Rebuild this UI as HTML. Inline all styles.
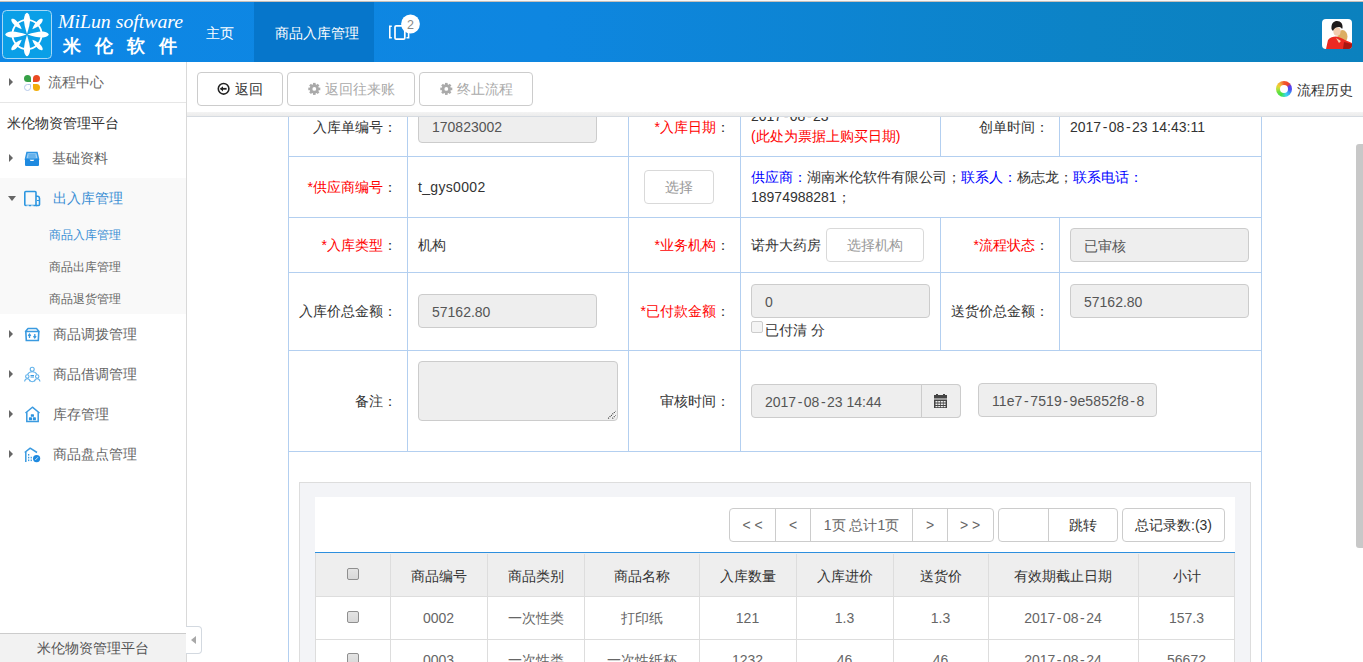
<!DOCTYPE html>
<html><head><meta charset="utf-8">
<style>
*{margin:0;padding:0;box-sizing:border-box}
html,body{width:1363px;height:662px;overflow:hidden;background:#fff;font-family:"Liberation Sans",sans-serif;font-size:14px;color:#333}
.a{position:absolute}
#top{left:0;top:0;width:1363px;height:2px;background:linear-gradient(#f7f7f7 50%,#c6bfba 50%)}
#hdr{left:0;top:2px;width:1363px;height:60px;background:linear-gradient(to right,#0d87e6 0%,#0e86e0 40%,#0c83c6 80%,#0b81be 100%)}
.logo{left:2px;top:10px;width:50px;height:49px;border:1px solid #9fd4f5;border-radius:4px;background:#109ce6}
.brand1{left:58px;top:10px;font-family:"Liberation Serif",serif;font-style:italic;font-size:19.8px;color:#fff;white-space:nowrap}
.brand2{left:63px;top:34px;font-size:18px;font-weight:bold;color:#fff;letter-spacing:14px;white-space:nowrap}
.nav{color:#fff;font-size:14px;white-space:nowrap}
.tab{left:254px;top:2px;width:120px;height:60px;background:#0676cb}
.avatar{left:1322px;top:19px;width:30px;height:30px;border-radius:4px;background:#fff;overflow:hidden}
#side{left:0;top:62px;width:187px;height:600px;background:#fff;border-right:1px solid #d9d9d9}
.sitem{left:0;width:186px;height:40px;line-height:40px;white-space:nowrap;color:#555}
.tri{width:0;height:0;border-top:4px solid transparent;border-bottom:4px solid transparent;border-left:4px solid #666}
.trid{width:0;height:0;border-left:4px solid transparent;border-right:4px solid transparent;border-top:5px solid #666}
.sub{font-size:12px;color:#666;white-space:nowrap}
#foot{left:0;top:633px;width:186px;height:29px;background:#f2f2f2;border-top:1px solid #ccc;text-align:center;line-height:28px;color:#555}
.btn{height:34px;border:1px solid #ccc;border-radius:4px;background:#fff;text-align:center;line-height:32px;white-space:nowrap}
.lbl{text-align:right;white-space:nowrap}
.red{color:#f00}
.blue{color:#00f}
.inp{height:34px;border:1px solid #ccc;border-radius:4px;background:#eee;line-height:32px;padding-top:1px;padding-left:13px;color:#555;white-space:nowrap;overflow:hidden}
.hl{background:#b3cff0;height:1px}
.vl{background:#b3cff0;width:1px}
.th{background:#f0f0f0}
.cell{text-align:center;white-space:nowrap;color:#555}
.cb{width:12px;height:12px;border:1px solid #8f8f8f;border-radius:2px;background:linear-gradient(#e4e4e4,#d8d8d8)}
.hy{font-style:normal;padding:0 1.5px}
</style></head><body>
<div class="a" id="top"></div>
<div class="a" id="hdr"></div>
<div class="a tab"></div>
<svg class="a" style="left:2px;top:10px" width="50" height="49" viewBox="0 0 50 49">
<defs><path id="pn" d="M0,-0.5 C1.8,-6 3.3,-12 3,-16 C2.7,-19.5 1,-21.8 0,-21.8 C-1,-21.8 -2.7,-19.5 -3,-16 C-3.3,-12 -1.8,-6 0,-0.5 Z"/><path id="pd" d="M0,-7.5 C2,-11 2.5,-15 2.2,-18 C1.9,-20.5 0.8,-21.8 0,-21.8 C-0.8,-21.8 -1.9,-20.5 -2.2,-18 C-2.5,-15 -2,-11 0,-7.5 Z"/></defs>
<rect x="0.5" y="0.5" width="49" height="48" rx="4" fill="#0a9fe7" stroke="#a6d8f6" stroke-width="1"/>
<g transform="translate(25,24.5)" fill="#fff">
<circle r="14.6" fill="none" stroke="#fff" stroke-width="1.8"/>
<use href="#pn"/><use href="#pn" transform="rotate(90)"/><use href="#pn" transform="rotate(180)"/><use href="#pn" transform="rotate(270)"/>
<use href="#pd" transform="rotate(45)"/><use href="#pd" transform="rotate(135)"/><use href="#pd" transform="rotate(225)"/><use href="#pd" transform="rotate(315)"/>
</g></svg>
<div class="a brand1">MiLun software</div>
<div class="a brand2">米伦软件</div>
<div class="a nav" style="left:206px;top:25px">主页</div>
<div class="a nav" style="left:275px;top:25px">商品入库管理</div>
<svg class="a" style="left:386px;top:12px" width="36" height="32" viewBox="0 0 36 32">
<path d="M5.8,14.2 H3.8 V25.8 H5.8" fill="none" stroke="#fff" stroke-width="1.6"/>
<path d="M20.5,18 H22.6 V25.8 H20.5" fill="none" stroke="#fff" stroke-width="1.6"/>
<rect x="9" y="13.9" width="9.8" height="13.2" rx="1.2" fill="none" stroke="#fff" stroke-width="1.7"/>
<circle cx="24.5" cy="12" r="9.4" fill="#fff"/>
<text x="24.5" y="16.5" text-anchor="middle" font-family="Liberation Sans" font-size="12.5" fill="#888">2</text>
</svg>
<svg class="a" style="left:1322px;top:19px" width="30" height="30" viewBox="0 0 30 30">
<defs><clipPath id="av"><rect width="30" height="30" rx="4"/></clipPath></defs>
<g clip-path="url(#av)">
<rect width="30" height="30" fill="#fff"/>
<ellipse cx="20.5" cy="17.5" rx="5" ry="6.5" fill="#dcae62"/>
<path d="M4,30 L6,21 C8,18 11,17.5 14,17.5 C17,18 20,19 23,21 L30,24 V30 Z" fill="#ec2a22"/>
<path d="M22,23 L30,25 V30 H21 Z" fill="#a81612"/>
<path d="M14,19 L17,24 L19,22 Z" fill="#f4d0b0"/>
<ellipse cx="15" cy="12.5" rx="3.6" ry="4.2" fill="#f2cdb0"/>
<path d="M9.5,10 C9,4 12,2 15,2 C19,2 21,5 20.5,9 C20,11 19.5,8 17,8 C14,8 12,9.5 11,12 C10.5,11 9.8,11 9.5,10 Z" fill="#1e1a1a"/>
</g></svg>

<!-- sidebar -->
<div class="a" id="side"></div>

<div class="a" style="left:0;top:102px;width:186px;height:1px;background:#e6e6e6"></div>
<div class="a tri" style="left:9px;top:78px"></div>
<div class="a" style="left:24px;top:75px;width:7px;height:7px;border-radius:50% 50% 0 50%;background:#36a046"></div>
<div class="a" style="left:33px;top:75px;width:7px;height:7px;border-radius:50% 50% 50% 0;background:#ea4a22"></div>
<div class="a" style="left:24px;top:84px;width:7px;height:7px;border-radius:50% 0 50% 50%;border:1px solid #b5c9ea;background:#fff"></div>
<div class="a" style="left:33px;top:84px;width:7px;height:7px;border-radius:0 50% 50% 50%;background:#f2ae0a"></div>
<div class="a" style="left:48px;top:74px;white-space:nowrap;color:#666">流程中心</div>
<div class="a" style="left:7px;top:115px;white-space:nowrap;color:#333">米伦物资管理平台</div>

<div class="a tri" style="left:9px;top:154px"></div>
<svg class="a" style="left:24px;top:151px" width="16" height="16" viewBox="0 0 16 16"><path d="M3,1.5 H13 L14.5,8 H1.5 Z" fill="#9fd0f5"/><path d="M3,1.5 H13 L14.5,8 H1.5 Z" fill="none" stroke="#2e94e2" stroke-width="1.5"/><path d="M4.5,4 H11.5 M4.2,6 H11.8" stroke="#2e94e2" stroke-width="1"/><path d="M1,8 H5.5 L6.5,10 H9.5 L10.5,8 H15 V14 Q15,15 14,15 H2 Q1,15 1,14 Z" fill="#1f8ae0"/></svg>
<div class="a" style="left:52px;top:150px;white-space:nowrap;color:#666">基础资料</div>

<div class="a" style="left:0;top:178px;width:187px;height:136px;background:#f9f9f9;border-right:1px solid #d9d9d9"></div>
<div class="a trid" style="left:8px;top:196px"></div>
<svg class="a" style="left:23px;top:190px" width="18" height="18" viewBox="0 0 18 18"><path d="M13,15.5 H2.8 Q1.8,15.5 1.8,14.5 V2.5 Q1.8,1.5 2.8,1.5 H12 Q13,1.5 13,2.5 Z" fill="none" stroke="#2c96e0" stroke-width="1.6"/><path d="M13,6.2 H15 Q16.5,6.5 16.5,8.5 V14.5 Q16.5,15.5 15.5,15.5 H13" fill="none" stroke="#2c96e0" stroke-width="1.6"/><path d="M3.5,16.2 H6 M8,16.2 H10.5" stroke="#f9f9f9" stroke-width="1.2"/><path d="M14,10.5 H16" stroke="#2c96e0" stroke-width="1"/></svg>
<div class="a" style="left:53px;top:190px;white-space:nowrap;color:#3a8ed4">出入库管理</div>
<div class="a sub" style="left:49px;top:227px;color:#3a8ed4">商品入库管理</div>
<div class="a sub" style="left:49px;top:259px">商品出库管理</div>
<div class="a sub" style="left:49px;top:291px">商品退货管理</div>

<div class="a tri" style="left:9px;top:330px"></div>
<svg class="a" style="left:24px;top:327px" width="17" height="15" viewBox="0 0 17 15"><path d="M4,1.5 H12.5 L15,4.5 H1.5 Z" fill="none" stroke="#3a9ae0" stroke-width="1.5" stroke-linejoin="round"/><path d="M1.8,4.5 L2.3,13.5 H14.3 L14.8,4.5" fill="none" stroke="#3a9ae0" stroke-width="1.6"/><path d="M5.5,11 V7.5 M4.2,8.8 L5.5,7 L6.8,8.8 M10.8,7 V10.5 M9.5,9.2 L10.8,11 L12.1,9.2" fill="none" stroke="#3a9ae0" stroke-width="1.3"/></svg>
<div class="a" style="left:53px;top:326px;white-space:nowrap;color:#666">商品调拨管理</div>
<div class="a tri" style="left:9px;top:370px"></div>
<svg class="a" style="left:24px;top:366px" width="17" height="18" viewBox="0 0 17 18"><g fill="none" stroke="#5eb0ea" stroke-width="1.1"><circle cx="8.2" cy="3.2" r="2"/><path d="M3.5,8.5 Q5,5.8 8.2,5.8 Q11.5,5.8 13,8.5"/><circle cx="3.3" cy="10.5" r="1.7"/><circle cx="13.2" cy="10.5" r="1.7"/><path d="M0.6,15.5 Q1,12.8 3.3,12.8 Q5.5,12.8 6,15.5 M10.5,15.5 Q11,12.8 13.2,12.8 Q15.4,12.8 16,15.5"/><path d="M5.5,14 Q8.2,17.5 11,14"/><path d="M6.5,9.5 H10 M6.5,11 H10" stroke="#3a9ae0" stroke-width="1"/></g></svg>
<div class="a" style="left:53px;top:366px;white-space:nowrap;color:#666">商品借调管理</div>
<div class="a tri" style="left:9px;top:410px"></div>
<svg class="a" style="left:24px;top:406px" width="17" height="17" viewBox="0 0 17 17"><path d="M1.5,7 L8.4,1.2 L15.5,7" fill="none" stroke="#3a9ae0" stroke-width="1.5" stroke-linejoin="round"/><path d="M2.8,6.2 V15.5 H14.2 V6.2" fill="none" stroke="#3a9ae0" stroke-width="1.5"/><rect x="6.8" y="8.2" width="3.2" height="2.6" rx="0.6" fill="#2a93e0"/><rect x="4.9" y="11.3" width="3.1" height="3" rx="0.6" fill="#2a93e0"/><rect x="8.8" y="11.3" width="3.1" height="3" rx="0.6" fill="#2a93e0"/></svg>
<div class="a" style="left:53px;top:406px;white-space:nowrap;color:#666">库存管理</div>
<div class="a tri" style="left:9px;top:450px"></div>
<svg class="a" style="left:24px;top:447px" width="17" height="17" viewBox="0 0 17 17"><path d="M0.7,5.5 L6.2,1.2 L13,5.5" fill="none" stroke="#3a9ae0" stroke-width="1.5" stroke-linejoin="round"/><path d="M1.8,5 V15" fill="none" stroke="#3a9ae0" stroke-width="1.5"/><g fill="#3a9ae0"><rect x="4" y="7" width="1.3" height="1.6"/><rect x="4" y="9.8" width="1.3" height="1.6"/><rect x="6.6" y="9.8" width="1.3" height="1.6"/><rect x="4" y="12.5" width="1.3" height="1.6"/><rect x="6.6" y="12.5" width="1.3" height="1.6"/></g><circle cx="12.6" cy="11.6" r="3.6" fill="#1f8ae0"/><path d="M11.3,13 L13.9,10.3" stroke="#cfe8fb" stroke-width="1"/></svg>
<div class="a" style="left:53px;top:446px;white-space:nowrap;color:#666">商品盘点管理</div>

<div class="a" id="foot">米伦物资管理平台</div>
<div class="a" style="left:186px;top:626px;width:16px;height:28px;border:1px solid #d3d9e0;border-left:none;border-radius:0 4px 4px 0;background:#fff"></div>
<div class="a" style="left:191px;top:636px;width:0;height:0;border-top:4px solid transparent;border-bottom:4px solid transparent;border-right:5px solid #a8a8a8"></div>

<!-- form table -->
<div class="a vl" style="left:288px;top:116px;height:546px"></div>
<div class="a vl" style="left:1261px;top:116px;height:546px"></div>
<div class="a vl" style="left:407px;top:116px;height:335px"></div>
<div class="a vl" style="left:628px;top:116px;height:335px"></div>
<div class="a vl" style="left:740px;top:116px;height:335px"></div>
<div class="a vl" style="left:940px;top:116px;height:40px"></div>
<div class="a vl" style="left:1059px;top:116px;height:40px"></div>
<div class="a vl" style="left:940px;top:217px;height:133px"></div>
<div class="a vl" style="left:1059px;top:217px;height:133px"></div>
<div class="a hl" style="left:288px;top:156px;width:974px"></div>
<div class="a hl" style="left:288px;top:217px;width:974px"></div>
<div class="a hl" style="left:288px;top:272px;width:974px"></div>
<div class="a hl" style="left:288px;top:350px;width:974px"></div>
<div class="a hl" style="left:288px;top:451px;width:974px"></div>

<!-- row1 -->
<div class="a lbl" style="left:288px;width:109px;top:119px">入库单编号：</div>
<div class="a inp" style="left:418px;top:109px;width:179px">170823002</div>
<div class="a lbl" style="left:628px;width:102px;top:119px"><span class="red">*入库日期</span>：</div>
<div class="a" style="left:751px;top:108px;white-space:nowrap">2017<i class="hy">-</i>08<i class="hy">-</i>23</div>
<div class="a red" style="left:751px;top:128px;white-space:nowrap">(此处为票据上购买日期)</div>
<div class="a lbl" style="left:940px;width:109px;top:119px">创单时间：</div>
<div class="a" style="left:1070px;top:119px;white-space:nowrap">2017<i class="hy">-</i>08<i class="hy">-</i>23 14:43:11</div>

<!-- row2 -->
<div class="a lbl" style="left:288px;width:109px;top:179px"><span class="red">*供应商编号</span>：</div>
<div class="a" style="left:418px;top:179px;white-space:nowrap"><span style="letter-spacing:0.33px">t_gys0002</span></div>
<div class="a btn" style="left:644px;top:170px;width:70px;color:#999;border-color:#d9d9d9">选择</div>
<div class="a" style="left:751px;top:169px;white-space:nowrap"><span class="blue">供应商：</span>湖南米伦软件有限公司；<span class="blue">联系人：</span>杨志龙；<span class="blue">联系电话：</span></div>
<div class="a" style="left:751px;top:189px;white-space:nowrap">18974988281；</div>

<!-- row3 -->
<div class="a lbl" style="left:288px;width:109px;top:237px"><span class="red">*入库类型</span>：</div>
<div class="a" style="left:418px;top:237px;white-space:nowrap">机构</div>
<div class="a lbl" style="left:628px;width:102px;top:237px"><span class="red">*业务机构</span>：</div>
<div class="a" style="left:751px;top:237px;white-space:nowrap">诺舟大药房</div>
<div class="a btn" style="left:826px;top:228px;width:98px;color:#999;border-color:#d9d9d9">选择机构</div>
<div class="a lbl" style="left:940px;width:109px;top:237px"><span class="red">*流程状态</span>：</div>
<div class="a inp" style="left:1070px;top:228px;width:179px">已审核</div>

<!-- row4 -->
<div class="a lbl" style="left:288px;width:109px;top:303px">入库价总金额：</div>
<div class="a inp" style="left:418px;top:294px;width:179px">57162.80</div>
<div class="a lbl" style="left:628px;width:102px;top:303px"><span class="red">*已付款金额</span>：</div>
<div class="a inp" style="left:751px;top:284px;width:179px">0</div>
<div class="a" style="left:751px;top:321px;width:12px;height:12px;border:1px solid #ccc;border-radius:2px;background:#f4f4f4"></div>
<div class="a" style="left:765px;top:322px;white-space:nowrap">已付清 分</div>
<div class="a lbl" style="left:940px;width:109px;top:303px">送货价总金额：</div>
<div class="a inp" style="left:1070px;top:284px;width:179px">57162.80</div>

<!-- row5 -->
<div class="a lbl" style="left:288px;width:109px;top:393px">备注：</div>
<div class="a inp" style="left:418px;top:361px;width:200px;height:60px"></div>
<div class="a lbl" style="left:628px;width:102px;top:393px">审核时间：</div>
<div class="a inp" style="left:751px;top:384px;width:210px;border-radius:4px" >2017<i class="hy">-</i>08<i class="hy">-</i>23 14:44</div>
<div class="a" style="left:921px;top:384px;width:40px;height:34px;border:1px solid #ccc;border-radius:0 4px 4px 0;background:#eee"></div>
<svg class="a" style="left:606px;top:409px" width="12" height="12" viewBox="0 0 12 12"><path d="M2.2,9.5 L9.6,2.2 M6.4,9.5 L9.6,6.4" stroke="#fff" stroke-width="2.2"/><path d="M2.2,9.5 L9.6,2.2 M6.4,9.5 L9.6,6.4" stroke="#444" stroke-width="1.3" stroke-dasharray="1.1,0.9"/></svg>
<svg class="a" style="left:934px;top:394px" width="14" height="15" viewBox="0 0 14 15"><rect x="0" y="1" width="13" height="3.5" fill="#444"/><rect x="0" y="5.5" width="13" height="8.5" fill="#444"/><g fill="#eee"><rect x="1.5" y="7" width="2" height="1.5"/><rect x="4.2" y="7" width="2" height="1.5"/><rect x="6.9" y="7" width="2" height="1.5"/><rect x="9.6" y="7" width="2" height="1.5"/><rect x="1.5" y="9.5" width="2" height="1.5"/><rect x="4.2" y="9.5" width="2" height="1.5"/><rect x="6.9" y="9.5" width="2" height="1.5"/><rect x="9.6" y="9.5" width="2" height="1.5"/><rect x="1.5" y="12" width="2" height="1.2"/><rect x="4.2" y="12" width="2" height="1.2"/><rect x="6.9" y="12" width="2" height="1.2"/><rect x="9.6" y="12" width="2" height="1.2"/></g><rect x="2" y="0" width="2" height="1.5" fill="#444"/><rect x="9" y="0" width="2" height="1.5" fill="#444"/></svg>
<div class="a inp" style="left:978px;top:383px;width:179px"><span style="letter-spacing:0.1px">11e7<i class="hy">-</i>7519<i class="hy">-</i>9e5852f8<i class="hy">-</i>8</span></div>

<!-- grid panel -->
<div class="a" style="left:299px;top:482px;width:952px;height:190px;background:#f3f4f7;border:1px solid #ddd"></div>
<div class="a" style="left:315px;top:497px;width:920px;height:180px;background:#fff"></div>

<div class="a" style="left:315px;top:552px;width:920px;height:44px;background:#eee;border-top:1px solid #2d8fde"></div>
<div class="a" style="left:315px;top:553px;width:1px;height:110px;background:#ddd"></div>
<div class="a" style="left:1234px;top:553px;width:1px;height:110px;background:#ddd"></div>
<div class="a" style="left:315px;top:596px;width:920px;height:1px;background:#ddd"></div>
<div class="a" style="left:315px;top:639px;width:920px;height:1px;background:#ddd"></div>
<div class="a" style="left:390px;top:554px;width:1px;height:110px;background:#ddd"></div>
<div class="a" style="left:487px;top:554px;width:1px;height:110px;background:#ddd"></div>
<div class="a" style="left:584px;top:554px;width:1px;height:110px;background:#ddd"></div>
<div class="a" style="left:699px;top:554px;width:1px;height:110px;background:#ddd"></div>
<div class="a" style="left:796px;top:554px;width:1px;height:110px;background:#ddd"></div>
<div class="a" style="left:893px;top:554px;width:1px;height:110px;background:#ddd"></div>
<div class="a" style="left:988px;top:554px;width:1px;height:110px;background:#ddd"></div>
<div class="a" style="left:1138px;top:554px;width:1px;height:110px;background:#ddd"></div>
<div class="a cb" style="left:347px;top:568px"></div>
<div class="a cell" style="left:390px;width:97px;top:568px;color:#333">商品编号</div>
<div class="a cell" style="left:487px;width:97px;top:568px;color:#333">商品类别</div>
<div class="a cell" style="left:584px;width:115px;top:568px;color:#333">商品名称</div>
<div class="a cell" style="left:699px;width:97px;top:568px;color:#333">入库数量</div>
<div class="a cell" style="left:796px;width:97px;top:568px;color:#333">入库进价</div>
<div class="a cell" style="left:893px;width:95px;top:568px;color:#333">送货价</div>
<div class="a cell" style="left:988px;width:150px;top:568px;color:#333">有效期截止日期</div>
<div class="a cell" style="left:1138px;width:97px;top:568px;color:#333">小计</div>
<div class="a cb" style="left:347px;top:611px"></div>
<div class="a cell" style="left:390px;width:97px;top:610px;color:#666">0002</div>
<div class="a cell" style="left:487px;width:97px;top:610px;color:#666">一次性类</div>
<div class="a cell" style="left:584px;width:115px;top:610px;color:#666">打印纸</div>
<div class="a cell" style="left:699px;width:97px;top:610px;color:#666">121</div>
<div class="a cell" style="left:796px;width:97px;top:610px;color:#666">1.3</div>
<div class="a cell" style="left:893px;width:95px;top:610px;color:#666">1.3</div>
<div class="a cell" style="left:988px;width:150px;top:610px;color:#666">2017<i class="hy">-</i>08<i class="hy">-</i>24</div>
<div class="a cell" style="left:1138px;width:97px;top:610px;color:#666">157.3</div>
<div class="a cb" style="left:347px;top:653px"></div>
<div class="a cell" style="left:390px;width:97px;top:652px;color:#666">0003</div>
<div class="a cell" style="left:487px;width:97px;top:652px;color:#666">一次性类</div>
<div class="a cell" style="left:584px;width:115px;top:652px;color:#666">一次性纸杯</div>
<div class="a cell" style="left:699px;width:97px;top:652px;color:#666">1232</div>
<div class="a cell" style="left:796px;width:97px;top:652px;color:#666">46</div>
<div class="a cell" style="left:893px;width:95px;top:652px;color:#666">46</div>
<div class="a cell" style="left:988px;width:150px;top:652px;color:#666">2017<i class="hy">-</i>08<i class="hy">-</i>24</div>
<div class="a cell" style="left:1138px;width:97px;top:652px;color:#666">56672</div>
<div class="a" style="left:729px;top:508px;width:265px;height:34px;border:1px solid #ccc;border-radius:4px"></div>
<div class="a cell" style="left:729px;width:47px;top:517px;color:#666">&lt; &lt;</div>
<div class="a cell" style="left:775px;width:36px;top:517px;color:#666">&lt;</div>
<div class="a cell" style="left:810px;width:103px;top:517px;color:#666">1页 总计1页</div>
<div class="a cell" style="left:912px;width:36px;top:517px;color:#666">&gt;</div>
<div class="a cell" style="left:947px;width:46px;top:517px;color:#666">&gt; &gt;</div>
<div class="a" style="left:775px;top:509px;width:1px;height:32px;background:#ccc"></div>
<div class="a" style="left:810px;top:509px;width:1px;height:32px;background:#ccc"></div>
<div class="a" style="left:912px;top:509px;width:1px;height:32px;background:#ccc"></div>
<div class="a" style="left:947px;top:509px;width:1px;height:32px;background:#ccc"></div>
<div class="a" style="left:998px;top:508px;width:120px;height:34px;border:1px solid #ccc;border-radius:4px"></div>
<div class="a" style="left:1048px;top:509px;width:1px;height:32px;background:#ccc"></div>
<div class="a cell" style="left:1048px;width:70px;top:517px;color:#333">跳转</div>
<div class="a" style="left:1122px;top:508px;width:103px;height:34px;border:1px solid #ccc;border-radius:4px"></div>
<div class="a cell" style="left:1122px;width:103px;top:517px;color:#333">总记录数:(3)</div>
<!-- toolbar -->
<div class="a" style="left:187px;top:62px;width:1176px;height:50px;background:#fff"></div>
<div class="a" style="left:187px;top:112px;width:1176px;height:5px;background:linear-gradient(#f3f3f3,#ececec);border-bottom:1px solid #d6dbe1"></div>
<div class="a btn" style="left:197px;top:72px;width:86px;color:#333;text-align:left;padding-left:37px">返回</div>
<div class="a btn" style="left:287px;top:72px;width:128px;color:#aaa;text-align:left;padding-left:37px">返回往来账</div>
<div class="a btn" style="left:419px;top:72px;width:114px;color:#aaa;text-align:left;padding-left:37px">终止流程</div>
<div class="a" style="left:1297px;top:82px;white-space:nowrap;color:#333">流程历史</div>
<svg class="a" style="left:216px;top:81px" width="16" height="16" viewBox="0 0 16 16"><circle cx="7.6" cy="7.8" r="5.3" fill="none" stroke="#222" stroke-width="1.6"/><path d="M4.6,7.8 H10.6" stroke="#222" stroke-width="1.8"/><path d="M4,7.8 L7,5.2 V10.4 Z" fill="#222"/></svg>
<svg class="a" style="left:307px;top:82px" width="14" height="14" viewBox="0 0 14 14"><g transform="translate(7.3,6.9)" fill="#aaa"><circle r="4.6"/><rect x="-1.3" y="-6" width="2.6" height="12"/><rect x="-1.3" y="-6" width="2.6" height="12" transform="rotate(45)"/><rect x="-1.3" y="-6" width="2.6" height="12" transform="rotate(90)"/><rect x="-1.3" y="-6" width="2.6" height="12" transform="rotate(135)"/><circle r="1.9" fill="#fff"/></g></svg>
<svg class="a" style="left:439px;top:82px" width="14" height="14" viewBox="0 0 14 14"><g transform="translate(7.3,6.9)" fill="#aaa"><circle r="4.6"/><rect x="-1.3" y="-6" width="2.6" height="12"/><rect x="-1.3" y="-6" width="2.6" height="12" transform="rotate(45)"/><rect x="-1.3" y="-6" width="2.6" height="12" transform="rotate(90)"/><rect x="-1.3" y="-6" width="2.6" height="12" transform="rotate(135)"/><circle r="1.9" fill="#fff"/></g></svg>
<div class="a" style="left:1276px;top:81px;width:16px;height:16px;border-radius:50%;background:conic-gradient(from 0deg,#f25a2c 0deg,#f0402a 40deg,#5b3df0 65deg,#4a55f2 100deg,#3a9cf2 125deg,#3ad6f4 160deg,#3fe24a 205deg,#6ee040 245deg,#b8e040 270deg,#f2d030 300deg,#f2a040 330deg,#f25a2c 360deg)"></div><div class="a" style="left:1280px;top:85px;width:8px;height:8px;border-radius:50%;background:#fff"></div>

<div class="a" style="left:1356px;top:144px;width:7px;height:404px;background:#c8c8c8;border-radius:3px 0 0 3px"></div>
</body></html>
